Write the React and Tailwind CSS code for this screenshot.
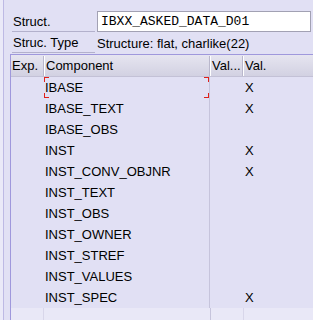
import React from "react";

const rows = [
  { name: "IBASE", val: "X" },
  { name: "IBASE_TEXT", val: "X" },
  { name: "IBASE_OBS", val: "" },
  { name: "INST", val: "X" },
  { name: "INST_CONV_OBJNR", val: "X" },
  { name: "INST_TEXT", val: "" },
  { name: "INST_OBS", val: "" },
  { name: "INST_OWNER", val: "" },
  { name: "INST_STREF", val: "" },
  { name: "INST_VALUES", val: "" },
  { name: "INST_SPEC", val: "X" },
];

function FocusCorners() {
  return (
    <>
      <span className="absolute left-0 top-0 w-[5px] h-[5px] border-l border-t border-[#e0201a]" />
      <span className="absolute left-0 bottom-0 w-[5px] h-[5px] border-l border-b border-[#e0201a]" />
      <span className="absolute right-0 top-0 w-[5px] h-[5px] border-r border-t border-[#e0201a]" />
      <span className="absolute right-0 bottom-0 w-[5px] h-[5px] border-r border-b border-[#e0201a]" />
    </>
  );
}

function App() {
  return (
    <div className="w-[313px] h-[320px] overflow-hidden bg-[#e1e0f4] flex text-[13px] text-black font-['Liberation_Sans',sans-serif]">
      {/* left frame strip */}
      <div className="w-[3px] bg-[#eae9f8]" />
      <div className="w-px bg-[#bdb9e4]" />

      <div className="flex-1 flex flex-col pl-[6px]">
        {/* Struct. */}
        <div className="flex items-stretch mt-[11px] h-[21px]">
          <div className="ml-[2px] w-[83px] border-b border-[#b3b1cc] pl-px pt-[2px] flex items-center">
            Struct.
          </div>
          <div className="ml-[2px] w-[214px] bg-white border border-[#a2a1b3] flex items-center pl-[3px] pt-px font-['Liberation_Mono',monospace]">
            IBXX_ASKED_DATA_D01
          </div>
        </div>

        {/* Struc. Type */}
        <div className="flex items-stretch h-[21px]">
          <div className="ml-[2px] w-[83px] border-b border-[#b3b1cc] pl-px pt-[2px] flex items-center">
            Struc. Type
          </div>
          <div className="ml-[2px] pt-[2px] flex items-center">Structure: flat, charlike(22)</div>
        </div>

        {/* table */}
        <div className="mt-[1px] flex-1 border-t border-l border-[#9f98dc] flex flex-col">
          <div className="flex h-[22px] pt-px bg-gradient-to-b from-[#e6e5f0] to-[#d2d1e2] border-b border-[#c3c1d6]">
            <div className="w-[33px] flex items-center pl-px border-r border-[#b9b7cc]">Exp.</div>
            <div className="w-[166px] flex items-center pl-px border-l border-white border-r border-r-[#b9b7cc]">Component</div>
            <div className="w-[33px] flex items-center pl-px border-l border-white border-r border-r-[#b9b7cc] whitespace-nowrap overflow-hidden">Val...</div>
            <div className="flex-1 flex items-center pl-px border-l border-white">Val.</div>
          </div>

          {rows.map((r, i) => (
            <div key={r.name} className="flex h-[21px]">
              <div className="w-[33px]" />
              <div className="relative w-[166px] flex items-center pl-[1px] border-r border-[#c6c4dc]">
                {r.name}
                {i === 0 && <FocusCorners />}
              </div>
              <div className="w-[34px]" />
              <div className="flex-1 flex items-center pl-[1px]">{r.val}</div>
            </div>
          ))}

          <div className="flex flex-1 bg-[#e9e8f7]">
            <div className="w-[33px] border-r border-[#d8d6ea]" />
            <div className="w-[167px] border-r border-[#c6c4dc]" />
            <div className="w-[33px] border-r border-[#d8d6ea]" />
            <div className="flex-1" />
          </div>
        </div>
      </div>
    </div>
  );
}

export default App;
